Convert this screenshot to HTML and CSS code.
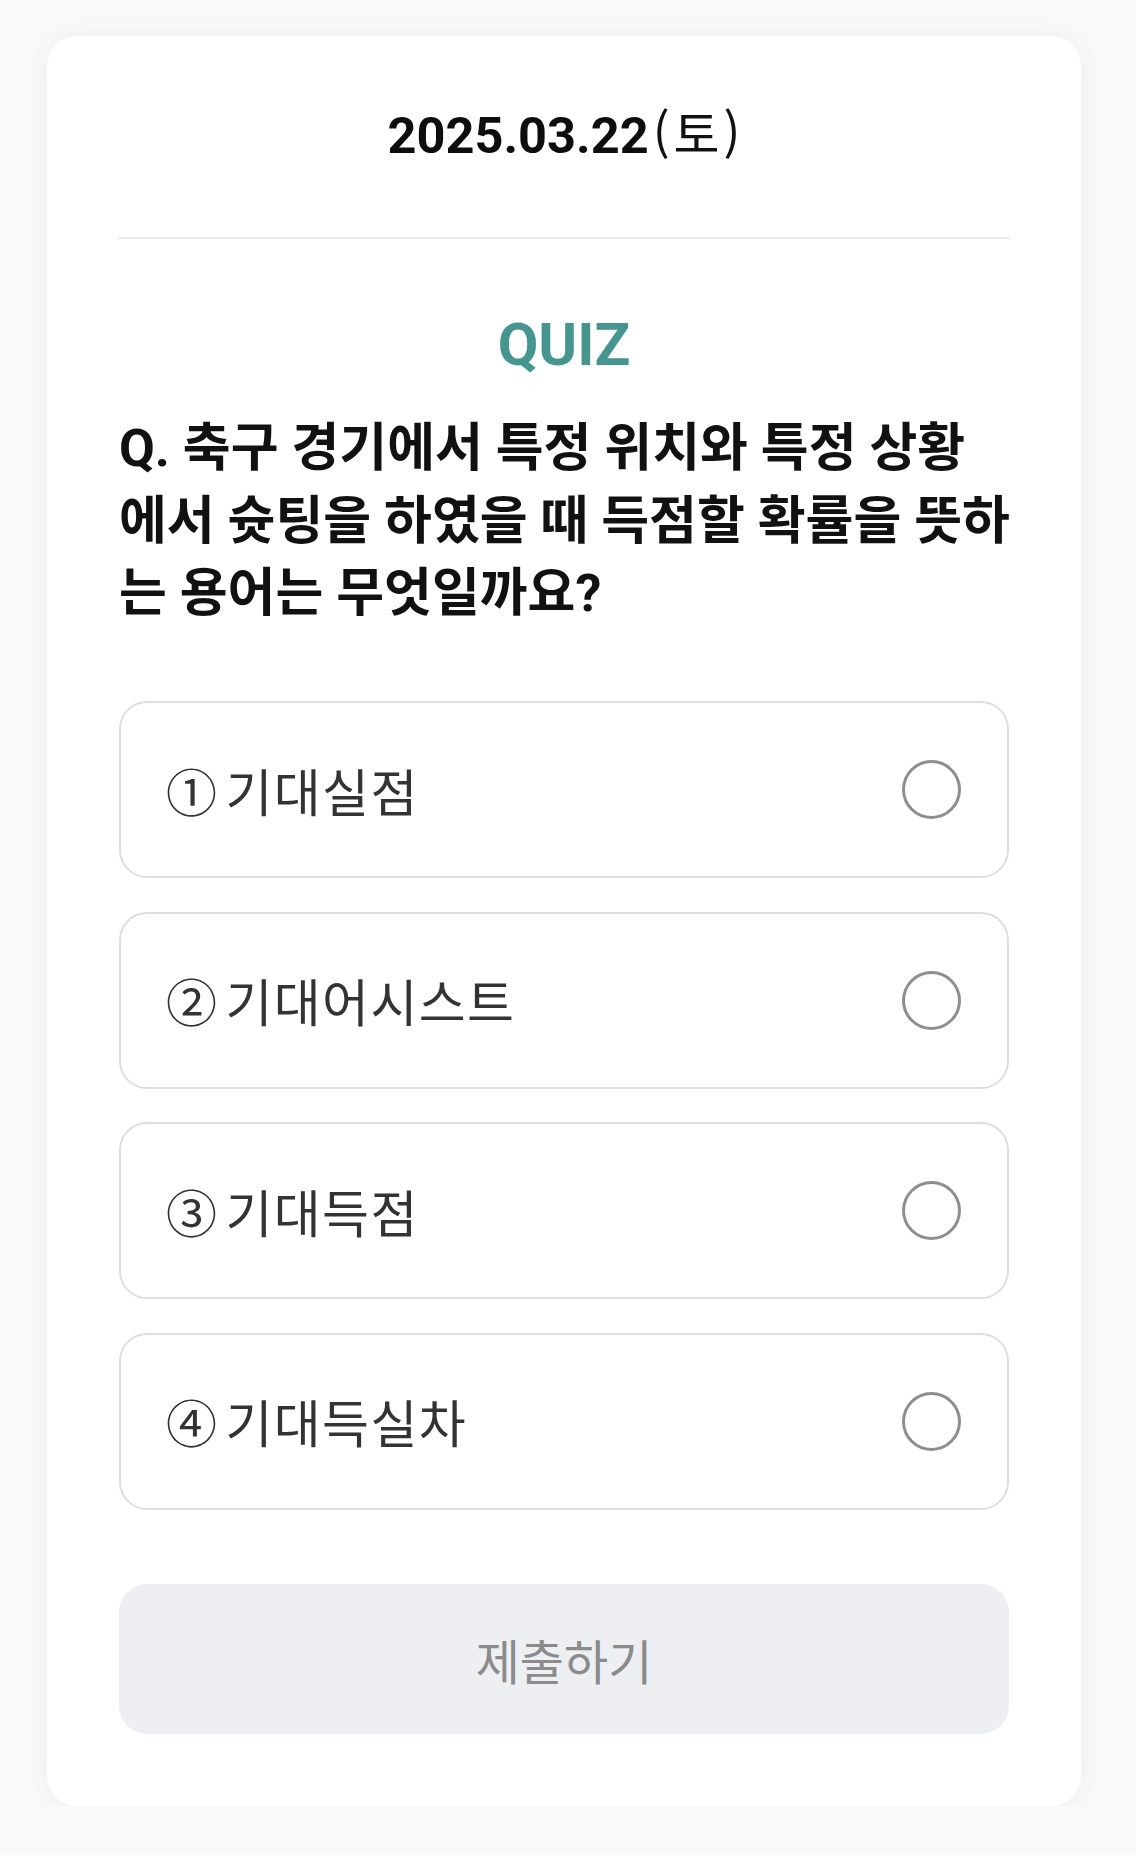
FILE: index.html
```html
<!DOCTYPE html>
<html lang="ko">
<head>
<meta charset="utf-8">
<title>QUIZ</title>
<link rel="stylesheet" href="styles.css">
</head>
<body>
<main class="card">
  <header class="date-row">
    <span class="date">2025.03.22</span><span class="weekday">(토)</span>
  </header>
  <h2 class="quiz-title">QUIZ</h2>
  <p class="question">Q. 축구 경기에서 특정 위치와 특정 상황<br>에서 슛팅을 하였을 때 득점할 확률을 뜻하<br>는 용어는 무엇일까요?</p>
  <ul class="options">
    <li class="option"><span class="option-label">① 기대실점</span><span class="radio"></span></li>
    <li class="option"><span class="option-label">② 기대어시스트</span><span class="radio"></span></li>
    <li class="option"><span class="option-label">③ 기대득점</span><span class="radio"></span></li>
    <li class="option"><span class="option-label">④ 기대득실차</span><span class="radio"></span></li>
  </ul>
  <button class="submit" type="button">제출하기</button>
</main>
</body>
</html>
```

FILE: styles.css
```css
html, body {
  margin: 0;
  padding: 0;
}

body {
  background: #f9f9f9;
  font-family: Roboto, "Noto Sans CJK KR", sans-serif;
  color: #111;
  padding-top: 36px;
  padding-left: 47px;
}

.card {
  box-sizing: border-box;
  width: 1034px;
  background: #fff;
  border-radius: 30px;
  box-shadow: 0 0 26px rgba(0, 0, 0, 0.05);
  padding: 65px 72px 72px;
}

.date-row {
  text-align: center;
  line-height: 60px;
  padding-bottom: 59px;
  border-bottom: 2px solid #e6e6e6;
}

.date {
  font-family: Roboto, sans-serif;
  font-weight: 700;
  font-size: 50.5px;
  color: #0d0d0d;
}

.weekday {
  font-family: "Noto Sans CJK KR", sans-serif;
  font-weight: 400;
  font-size: 50px;
  letter-spacing: 4px;
  margin-left: 4px;
  margin-right: -4px;
  color: #111;
}

.quiz-title {
  margin: 72px 0 0;
  text-align: center;
  font-family: Roboto, sans-serif;
  font-weight: 700;
  font-size: 59px;
  line-height: 68px;
  color: #46958f;
}

.question {
  margin: 34px 0 0;
  font-family: Roboto, "Noto Sans CJK KR", sans-serif;
  font-weight: 700;
  font-size: 52px;
  line-height: 72.7px;
  color: #111;
  white-space: nowrap;
}

.options {
  list-style: none;
  margin: 70px 0 0;
  padding: 0;
  display: flex;
  flex-direction: column;
  gap: 33.6px;
}

.option {
  box-sizing: border-box;
  height: 177px;
  border: 2px solid #dedede;
  border-radius: 28px;
  padding: 0 46px 0 45px;
  display: flex;
  align-items: center;
  justify-content: space-between;
}

.option-label {
  font-family: Roboto, "Noto Sans CJK KR", sans-serif;
  font-size: 51px;
  font-weight: 400;
  letter-spacing: 1.4px;
  word-spacing: -7px;
  color: #333;
}

.radio {
  box-sizing: border-box;
  width: 59px;
  height: 59px;
  border: 3px solid #8e8e8e;
  border-radius: 50%;
  flex: none;
}

.submit {
  display: block;
  box-sizing: border-box;
  width: 100%;
  height: 150px;
  margin-top: 74px;
  border: none;
  border-radius: 28px;
  background: #eeeff3;
  color: #8b8b8b;
  font-family: "Noto Sans CJK KR", sans-serif;
  font-size: 48px;
  font-weight: 400;
  padding: 0;
}
```
